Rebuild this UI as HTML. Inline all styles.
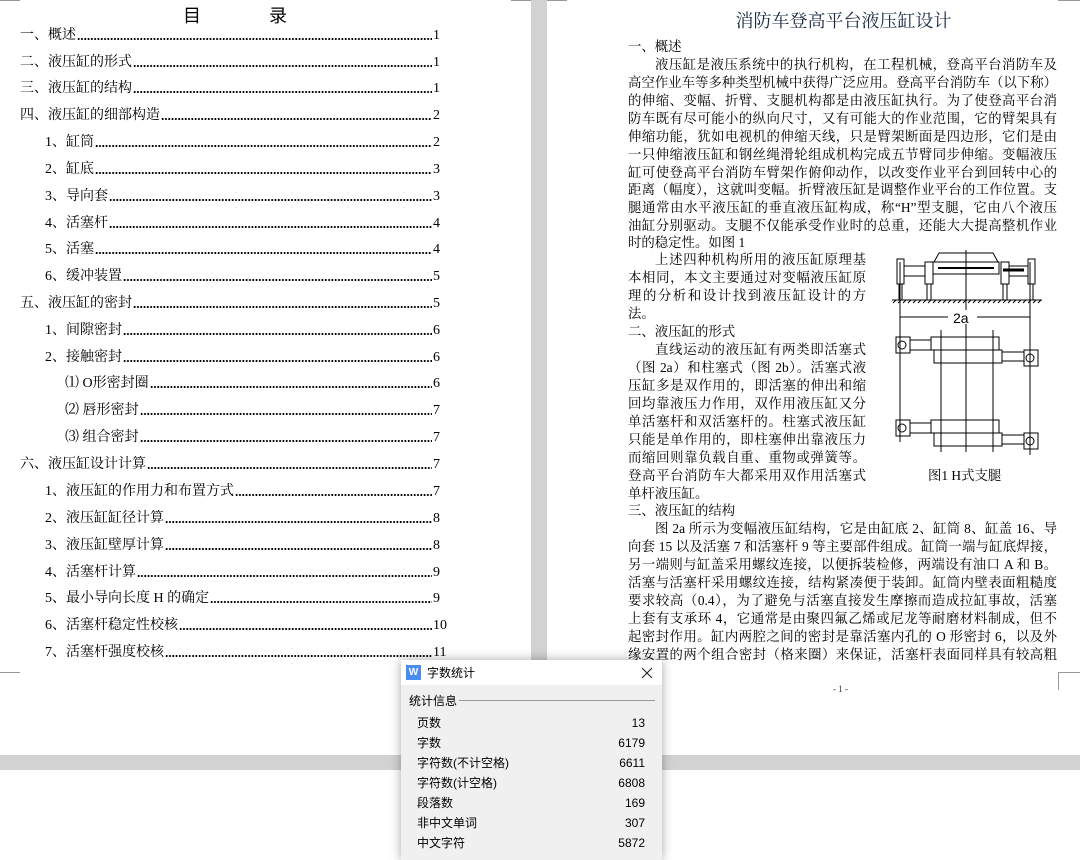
<!DOCTYPE html>
<html><head><meta charset="utf-8"><style>
*{margin:0;padding:0;box-sizing:border-box}
body{width:1080px;height:852px;position:relative;overflow:hidden;background:#fff;font-family:"Liberation Serif","Noto Serif CJK SC",serif;color:#000}
.gv{position:absolute;left:531px;top:0;width:16px;height:852px;background:#d2d2d2}
.gh{position:absolute;left:0;top:755px;width:1080px;height:15px;background:#d2d2d2}
.toc{position:absolute;height:20px;display:flex;align-items:flex-end;font-size:14px;line-height:18px;white-space:nowrap}
.toc .f{flex:1;height:2px;margin:0 1px 5px 1px;background-image:radial-gradient(circle,#000 0.9px,transparent 1.1px);background-size:3.3px 2px;background-repeat:repeat-x}
.toc .n{width:8px;text-align:left}
.ln{position:absolute;font-size:13.4px;line-height:18px;height:18px;white-space:nowrap;overflow:hidden;text-align:justify;text-align-last:justify}
.ln.l{text-align-last:left}
.cm{position:absolute;border-color:#999;border-style:solid;border-width:0}
.dlg{position:absolute;left:401px;top:660px;width:261px;height:200px;background:#f0f0f0;box-shadow:0 0 10px rgba(0,0,0,.35);font-family:"Liberation Sans","Noto Sans CJK SC",sans-serif;font-size:12px}
.dlg .tb{height:25px;background:#fff;position:relative}
.row{position:absolute;left:16px;width:228px;display:flex;justify-content:space-between;height:20px;line-height:20px}
</style></head><body>
<div class="gv"></div><div class="gh"></div>
<div class="cm" style="left:0;top:0;width:20px;height:1px;border-bottom-width:1px"></div>
<div class="cm" style="left:511px;top:0;width:20px;height:1px;border-bottom-width:1px"></div>
<div class="cm" style="left:0;top:672px;width:20px;height:10px;border-top-width:1px"></div>
<div class="cm" style="left:511px;top:672px;width:1px;height:18px;border-left-width:1px"></div>
<div class="cm" style="left:547px;top:0;width:20px;height:1px;border-bottom-width:1px"></div>
<div class="cm" style="left:1058px;top:0;width:22px;height:1px;border-bottom-width:1px"></div>
<div class="cm" style="left:1058px;top:672px;width:22px;height:18px;border-top-width:1px;border-left-width:1px"></div>

<div style="position:absolute;left:183px;top:2px;font-size:18px;font-family:'Noto Sans CJK SC',sans-serif">目</div>
<div style="position:absolute;left:269px;top:2px;font-size:18px;font-family:'Noto Sans CJK SC',sans-serif">录</div>

<div class="toc" style="left:20px;top:25px;width:421px"><span>一、概述</span><span class="f"></span><span class="n">1</span></div>
<div class="toc" style="left:20px;top:52px;width:421px"><span>二、液压缸的形式</span><span class="f"></span><span class="n">1</span></div>
<div class="toc" style="left:20px;top:78px;width:421px"><span>三、液压缸的结构</span><span class="f"></span><span class="n">1</span></div>
<div class="toc" style="left:20px;top:105px;width:421px"><span>四、液压缸的细部构造</span><span class="f"></span><span class="n">2</span></div>
<div class="toc" style="left:45px;top:132px;width:396px"><span>1、缸筒</span><span class="f"></span><span class="n">2</span></div>
<div class="toc" style="left:45px;top:159px;width:396px"><span>2、缸底</span><span class="f"></span><span class="n">3</span></div>
<div class="toc" style="left:45px;top:186px;width:396px"><span>3、导向套</span><span class="f"></span><span class="n">3</span></div>
<div class="toc" style="left:45px;top:213px;width:396px"><span>4、活塞杆</span><span class="f"></span><span class="n">4</span></div>
<div class="toc" style="left:45px;top:239px;width:396px"><span>5、活塞</span><span class="f"></span><span class="n">4</span></div>
<div class="toc" style="left:45px;top:266px;width:396px"><span>6、缓冲装置</span><span class="f"></span><span class="n">5</span></div>
<div class="toc" style="left:20px;top:293px;width:421px"><span>五、液压缸的密封</span><span class="f"></span><span class="n">5</span></div>
<div class="toc" style="left:45px;top:320px;width:396px"><span>1、间隙密封</span><span class="f"></span><span class="n">6</span></div>
<div class="toc" style="left:45px;top:347px;width:396px"><span>2、接触密封</span><span class="f"></span><span class="n">6</span></div>
<div class="toc" style="left:65px;top:373px;width:376px"><span>⑴ O形密封圈</span><span class="f"></span><span class="n">6</span></div>
<div class="toc" style="left:65px;top:400px;width:376px"><span>⑵ 唇形密封</span><span class="f"></span><span class="n">7</span></div>
<div class="toc" style="left:65px;top:427px;width:376px"><span>⑶ 组合密封</span><span class="f"></span><span class="n">7</span></div>
<div class="toc" style="left:20px;top:454px;width:421px"><span>六、液压缸设计计算</span><span class="f"></span><span class="n">7</span></div>
<div class="toc" style="left:45px;top:481px;width:396px"><span>1、液压缸的作用力和布置方式</span><span class="f"></span><span class="n">7</span></div>
<div class="toc" style="left:45px;top:508px;width:396px"><span>2、液压缸缸径计算</span><span class="f"></span><span class="n">8</span></div>
<div class="toc" style="left:45px;top:535px;width:396px"><span>3、液压缸壁厚计算</span><span class="f"></span><span class="n">8</span></div>
<div class="toc" style="left:45px;top:562px;width:396px"><span>4、活塞杆计算</span><span class="f"></span><span class="n">9</span></div>
<div class="toc" style="left:45px;top:588px;width:396px"><span>5、最小导向长度 H 的确定</span><span class="f"></span><span class="n">9</span></div>
<div class="toc" style="left:45px;top:615px;width:403px"><span>6、活塞杆稳定性校核</span><span class="f"></span><span class="n" style="width:15px">10</span></div>
<div class="toc" style="left:45px;top:642px;width:403px"><span>7、活塞杆强度校核</span><span class="f"></span><span class="n" style="width:15px">11</span></div>

<div style="position:absolute;left:600px;top:7px;width:487px;text-align:center;font-size:18px;color:#1a2a44">消防车登高平台液压缸设计</div>

<div class="ln l" style="left:628px;top:38px">一、概述</div>
<div class="ln" style="left:655px;top:56px;width:402px">液压缸是液压系统中的执行机构，在工程机械，登高平台消防车及</div>
<div class="ln" style="left:628px;top:74px;width:429px">高空作业车等多种类型机械中获得广泛应用。登高平台消防车（以下称）</div>
<div class="ln" style="left:628px;top:92px;width:429px">的伸缩、变幅、折臂、支腿机构都是由液压缸执行。为了使登高平台消</div>
<div class="ln" style="left:628px;top:110px;width:429px">防车既有尽可能小的纵向尺寸，又有可能大的作业范围，它的臂架具有</div>
<div class="ln" style="left:628px;top:128px;width:429px">伸缩功能，犹如电视机的伸缩天线，只是臂架断面是四边形，它们是由</div>
<div class="ln" style="left:628px;top:146px;width:429px">一只伸缩液压缸和钢丝绳滑轮组成机构完成五节臂同步伸缩。变幅液压</div>
<div class="ln" style="left:628px;top:164px;width:429px">缸可使登高平台消防车臂架作俯仰动作，以改变作业平台到回转中心的</div>
<div class="ln" style="left:628px;top:181px;width:429px">距离（幅度），这就叫变幅。折臂液压缸是调整作业平台的工作位置。支</div>
<div class="ln" style="left:628px;top:199px;width:429px">腿通常由水平液压缸的垂直液压缸构成，称“H”型支腿，它由八个液压</div>
<div class="ln" style="left:628px;top:217px;width:429px">油缸分别驱动。支腿不仅能承受作业时的总重，还能大大提高整机作业</div>
<div class="ln l" style="left:628px;top:234px">时的稳定性。如图 1</div>
<div class="ln" style="left:655px;top:251px;width:211px">上述四种机构所用的液压缸原理基</div>
<div class="ln" style="left:628px;top:269px;width:238px">本相同，本文主要通过对变幅液压缸原</div>
<div class="ln" style="left:628px;top:287px;width:238px">理的分析和设计找到液压缸设计的方</div>
<div class="ln l" style="left:628px;top:305px">法。</div>
<div class="ln l" style="left:628px;top:323px">二、液压缸的形式</div>
<div class="ln" style="left:655px;top:341px;width:211px">直线运动的液压缸有两类即活塞式</div>
<div class="ln" style="left:628px;top:359px;width:238px">（图 2a）和柱塞式（图 2b）。活塞式液</div>
<div class="ln" style="left:628px;top:377px;width:238px">压缸多是双作用的，即活塞的伸出和缩</div>
<div class="ln" style="left:628px;top:395px;width:238px">回均靠液压力作用，双作用液压缸又分</div>
<div class="ln" style="left:628px;top:413px;width:238px">单活塞杆和双活塞杆的。柱塞式液压缸</div>
<div class="ln" style="left:628px;top:431px;width:238px">只能是单作用的，即柱塞伸出靠液压力</div>
<div class="ln" style="left:628px;top:449px;width:238px">而缩回则靠负载自重、重物或弹簧等。</div>
<div class="ln" style="left:628px;top:467px;width:238px">登高平台消防车大都采用双作用活塞式</div>
<div class="ln l" style="left:628px;top:485px">单杆液压缸。</div>
<div class="ln l" style="left:628px;top:502px">三、液压缸的结构</div>
<div class="ln" style="left:655px;top:520px;width:402px">图 2a 所示为变幅液压缸结构，它是由缸底 2、缸筒 8、缸盖 16、导</div>
<div class="ln" style="left:628px;top:538px;width:429px">向套 15 以及活塞 7 和活塞杆 9 等主要部件组成。缸筒一端与缸底焊接，</div>
<div class="ln" style="left:628px;top:556px;width:429px">另一端则与缸盖采用螺纹连接，以便拆装检修，两端设有油口 A 和 B。</div>
<div class="ln" style="left:628px;top:574px;width:429px">活塞与活塞杆采用螺纹连接，结构紧凑便于装卸。缸筒内壁表面粗糙度</div>
<div class="ln" style="left:628px;top:592px;width:429px">要求较高（0.4），为了避免与活塞直接发生摩擦而造成拉缸事故，活塞</div>
<div class="ln" style="left:628px;top:610px;width:429px">上套有支承环 4，它通常是由聚四氟乙烯或尼龙等耐磨材料制成，但不</div>
<div class="ln" style="left:628px;top:628px;width:429px">起密封作用。缸内两腔之间的密封是靠活塞内孔的 O 形密封 6，以及外</div>
<div class="ln" style="left:628px;top:646px;width:429px">缘安置的两个组合密封（格来圈）来保证，活塞杆表面同样具有较高粗</div>
<div style="position:absolute;left:833px;top:684px;font-size:9px;color:#333">- 1 -</div>

<svg style="position:absolute;left:0;top:0" width="1080" height="852" fill="none" stroke="#000" stroke-width="1">
<rect x="897" y="259" width="7" height="25"/><rect x="925" y="262" width="8" height="22"/>
<rect x="904" y="266" width="21" height="10"/>
<polyline points="934,262 939,253 993,253 998,262"/><rect x="933" y="262" width="66" height="12"/>
<line x1="938" y1="268" x2="994" y2="268" stroke-width="2"/>
<rect x="1001" y="262" width="8" height="22"/><rect x="1028" y="259" width="7" height="25"/>
<rect x="1009" y="266" width="19" height="10"/><line x1="1003" y1="270" x2="1024" y2="270" stroke-width="3"/>
<path d="M899 284V300M902 284V300M927 284V300M931 284V300M1003 284V300M1007 284V300M1030 284V300M1033 284V300"/>
<line x1="892" y1="300" x2="1042" y2="300"/>
<path d="M893 303l3-3M898 303l3-3M903 303l3-3M908 303l3-3M913 303l3-3M918 303l3-3M923 303l3-3M928 303l3-3M933 303l3-3M938 303l3-3M943 303l3-3M948 303l3-3M953 303l3-3M958 303l3-3M963 303l3-3M968 303l3-3M973 303l3-3M978 303l3-3M983 303l3-3M988 303l3-3M993 303l3-3M998 303l3-3M1003 303l3-3M1008 303l3-3M1013 303l3-3M1018 303l3-3M1023 303l3-3M1028 303l3-3M1033 303l3-3M1038 303l3-3"/>
<path d="M900 317H948M977 317H1030M900 262V442M1030 262V455M941 330V452M966 250V452M993 330V452"/>
<rect x="896" y="337" width="14" height="16"/><circle cx="902" cy="345" r="4"/>
<rect x="910" y="340" width="21" height="10"/><rect x="931" y="337" width="68" height="13"/><rect x="934" y="350" width="68" height="13"/>
<rect x="1002" y="352" width="22" height="9"/><rect x="1024" y="350" width="14" height="16"/><circle cx="1030" cy="358" r="4"/>
<rect x="896" y="420" width="14" height="16"/><circle cx="902" cy="428" r="4"/>
<rect x="910" y="423" width="21" height="10"/><rect x="931" y="420" width="68" height="13"/><rect x="934" y="433" width="68" height="13"/>
<rect x="1002" y="435" width="22" height="9"/><rect x="1024" y="433" width="14" height="16"/><circle cx="1030" cy="441" r="4"/>
<rect x="950" y="310" width="26" height="14" fill="#fff" stroke="none"/>
<text x="953" y="323" font-size="14" fill="#000" stroke="none" font-family="Liberation Sans,sans-serif">2a</text>
</svg>
<div style="position:absolute;left:928px;top:465px;font-size:13.4px">图1 H式支腿</div>

<div class="dlg">
<div class="tb">
<div style="position:absolute;left:5px;top:5px;width:15px;height:15px;background:#4a8df0;color:#fff;font-size:10px;line-height:15px;text-align:center;font-weight:bold">W</div>
<div style="position:absolute;left:26px;top:4px;font-size:12px">字数统计</div>
<svg style="position:absolute;left:240px;top:7px" width="12" height="12" stroke="#222" stroke-width="1.1"><path d="M1 1L11 11M11 1L1 11"/></svg>
</div>
<div style="position:absolute;left:8px;top:32px">统计信息</div>
<div style="position:absolute;left:58px;top:40px;width:196px;height:1px;background:#999"></div>
<div class="row" style="top:53px"><span>页数</span><span>13</span></div>
<div class="row" style="top:73px"><span>字数</span><span>6179</span></div>
<div class="row" style="top:93px"><span>字符数(不计空格)</span><span>6611</span></div>
<div class="row" style="top:113px"><span>字符数(计空格)</span><span>6808</span></div>
<div class="row" style="top:133px"><span>段落数</span><span>169</span></div>
<div class="row" style="top:153px"><span>非中文单词</span><span>307</span></div>
<div class="row" style="top:173px"><span>中文字符</span><span>5872</span></div>
</div>
</body></html>
